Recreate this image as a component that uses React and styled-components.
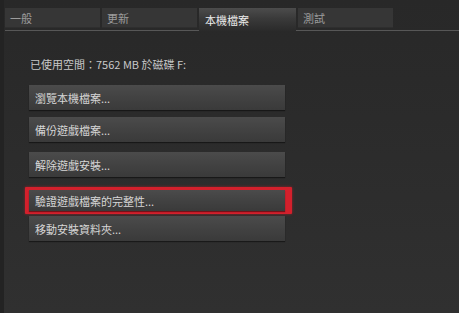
import React from "react";
import styled, { createGlobalStyle } from "styled-components";

const GlobalStyle = createGlobalStyle`
  html, body {
    margin: 0;
    padding: 0;
    background: #2b2b2b;
  }
  body {
    font-family: "Noto Sans CJK TC", "Noto Sans", "Liberation Sans", sans-serif;
  }
`;

const Page = styled.div`
  width: 459px;
  height: 313px;
  overflow: hidden;
  background: linear-gradient(to bottom, #282828 0%, #2c2c2c 50%, #303030 100%);
  border-left: 4px solid #232323;
  box-sizing: border-box;
  padding-top: 8px;
`;

const TabBar = styled.div`
  display: flex;
  gap: 2px;
  height: 22px;
  margin-left: 1px;
  border-bottom: 1px solid #575757;
`;

const Tab = styled.div`
  width: ${({ active }) => (active ? "97px" : "95px")};
  height: ${({ active }) => (active ? "23px" : "20px")};
  margin-bottom: ${({ active }) => (active ? "-1px" : "0")};
  box-sizing: border-box;
  padding-left: ${({ active }) => (active ? "6px" : "5px")};
  display: flex;
  align-items: center;
  font-size: 11px;
  color: ${({ active }) => (active ? "#ececec" : "#9c9c9c")};
  background: ${({ active }) =>
    active
      ? "linear-gradient(to bottom, #4c4c4c 0%, #3a3a3a 45%, #2a2a2a 100%)"
      : "#363636"};
  box-shadow: ${({ active }) => (active ? "none" : "inset 0 -1px 0 #2e2e2e")};
`;

const Content = styled.div`
  padding: 26px 0 0 21px;
  display: flex;
  flex-direction: column;
  align-items: flex-start;
`;

const Usage = styled.div`
  font-size: 11px;
  line-height: 15px;
  color: #c8c8c8;
  margin-left: 5px;
  margin-bottom: 13px;
`;

const Frame = styled.div`
  margin-top: ${({ top }) => top}px;
  border-radius: 1px;
  background: ${({ highlighted }) => (highlighted ? "#d3202c" : "transparent")};
  box-shadow: ${({ highlighted }) =>
    highlighted ? "0 0 3px rgba(220, 30, 40, 0.6)" : "none"};
  padding: ${({ highlighted }) => (highlighted ? "3px 7px 3px 4px" : "0 0 0 4px")};
`;

const Button = styled.div`
  width: 256px;
  height: ${({ h }) => h || 25}px;
  box-sizing: border-box;
  padding-left: 6px;
  display: flex;
  align-items: center;
  font-size: 11px;
  color: #d6d6d6;
  background: linear-gradient(to bottom, #4b4b4b 0%, #424242 50%, #3a3a3a 100%);
  box-shadow: 0 1px 1px rgba(0, 0, 0, 0.45);
`;

const actions = [
  { label: "瀏覽本機檔案...", top: 0 },
  { label: "備份遊戲檔案...", top: 7 },
  { label: "解除遊戲安裝...", top: 10 },
  { label: "驗證遊戲檔案的完整性...", top: 10, highlighted: true, h: 21 },
  { label: "移動安裝資料夾...", top: 2 },
];

export default function App() {
  return (
    <Page>
      <GlobalStyle />
      <TabBar>
        <Tab>一般</Tab>
        <Tab>更新</Tab>
        <Tab active>本機檔案</Tab>
        <Tab>測試</Tab>
      </TabBar>
      <Content>
        <Usage>已使用空間：7562 MB 於磁碟 F:</Usage>
        {actions.map((a) => (
          <Frame key={a.label} top={a.top} highlighted={a.highlighted}>
            <Button h={a.h}>{a.label}</Button>
          </Frame>
        ))}
      </Content>
    </Page>
  );
}
